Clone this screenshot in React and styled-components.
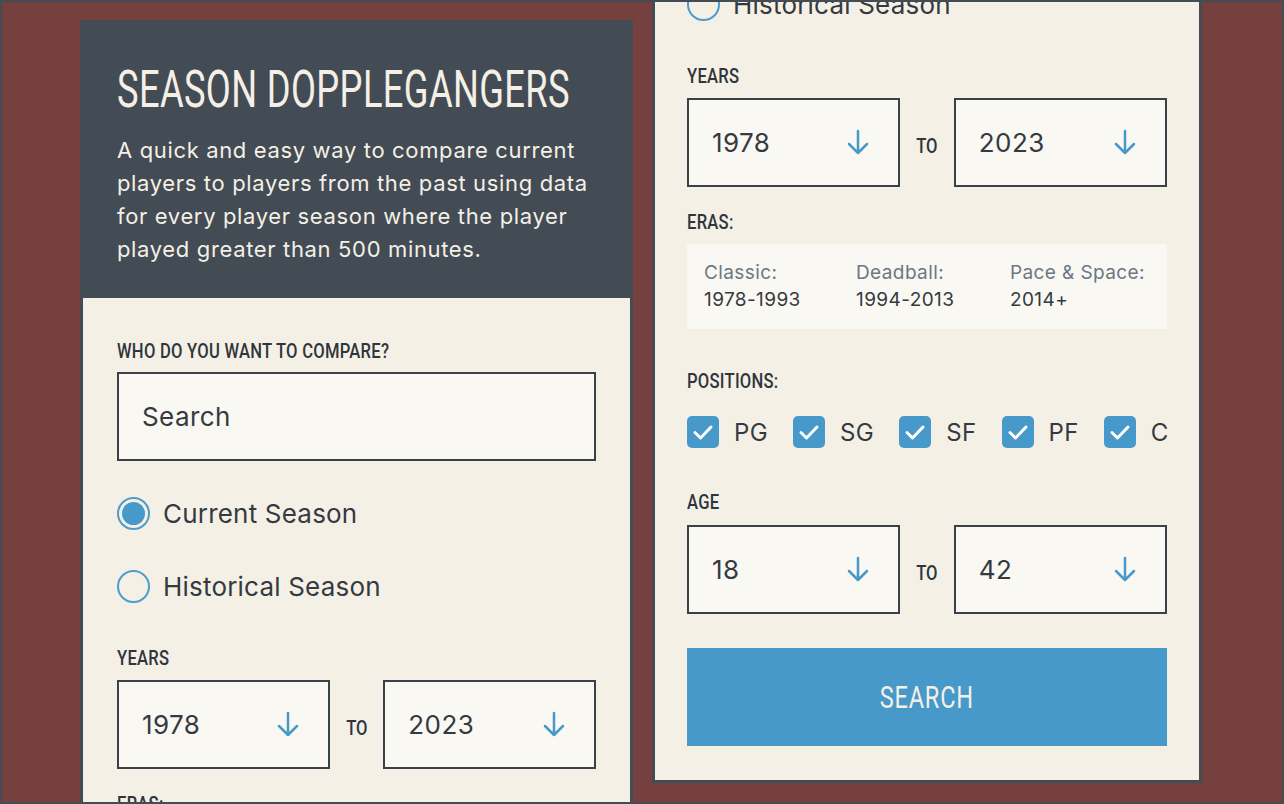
import React from "react";
import styled, { createGlobalStyle } from "styled-components";

const condensed = `Roboto, "Liberation Sans", sans-serif`;
const sans = `Inter, "Noto Sans", sans-serif`;

const GlobalStyle = createGlobalStyle`
  * { box-sizing: border-box; }
  html, body { margin: 0; padding: 0; }
  body { font-family: ${sans}; background: #76403f; }
`;

const Page = styled.div`
  width: 1284px;
  height: 804px;
  border: 2px solid #434b55;
  background: #76403f;
  overflow: hidden;
  display: flex;
  align-items: flex-start;
  gap: 19px;
  padding-left: 78px;
`;

const Card = styled.div`
  flex: none;
  width: ${(p) => p.$width}px;
  border: 3px solid #434b55;
  background: #f4f0e6;
  align-self: ${(p) => (p.$anchor === "bottom" ? "flex-end" : "flex-start")};
  margin: ${(p) => (p.$anchor === "bottom" ? "0 0 19px" : "18px 0 0")};
`;

const Header = styled.header`
  background: #434b55;
  color: #f4f0e6;
  padding: 39px ${(p) => p.$inset}px 32px;
`;

/* narrow display face: no condensed family is installed, so squeeze Roboto */
const Title = styled.h1`
  margin: 0;
  font-family: ${condensed};
  font-weight: 400;
  font-size: 51px;
  line-height: 56px;
  letter-spacing: 0.5px;
  text-transform: uppercase;
  white-space: nowrap;
  transform: scaleX(0.712);
  transform-origin: left center;
`;

const Intro = styled.p`
  margin: 16px 0 0;
  font-size: 22px;
  line-height: 33px;
  letter-spacing: 0.65px;
`;

const Body = styled.div`
  display: flex;
  flex-direction: column;
  padding: 41px ${(p) => p.$inset}px 34px;
  color: #343a40;
`;

const Group = styled.div`
  display: flex;
  flex-direction: column;
  align-items: flex-start;
  gap: ${(p) => p.$inner ?? 10}px;
  margin-top: ${(p) => p.$space ?? 0}px;
`;

const Label = styled.div`
  font-family: ${condensed};
  font-weight: 500;
  font-size: 20px;
  line-height: 24px;
  letter-spacing: 0.3px;
  text-transform: uppercase;
  white-space: nowrap;
  color: #2f353b;
  transform: scaleX(0.83);
  transform-origin: left center;
`;

const Box = styled.div`
  align-self: stretch;
  height: 89px;
  border: 2px solid #3b4148;
  background: #f9f8f3;
  display: flex;
  align-items: center;
  justify-content: space-between;
  padding: 0 29px 0 23px;
  font-size: 26px;
  letter-spacing: 0.4px;
  color: #343a40;
`;

const SelectBox = styled(Box)`
  flex: 1 1 0;
`;

const RadioRow = styled.label`
  display: flex;
  align-items: center;
  gap: 13px;
  height: 33px;
  font-size: 26px;
  letter-spacing: 0.2px;
  color: #343a40;
`;

const Radio = styled.span`
  width: 33px;
  height: 33px;
  border-radius: 50%;
  border: 2px solid #4d9dcc;
  display: flex;
  align-items: center;
  justify-content: center;
  &::after {
    content: "";
    width: 23px;
    height: 23px;
    border-radius: 50%;
    background: ${(p) => (p.$on ? "#4799c9" : "transparent")};
  }
`;

const RangeRow = styled.div`
  align-self: stretch;
  display: flex;
  align-items: center;
  gap: 16px;
`;

const To = styled.span`
  font-family: ${condensed};
  font-weight: 500;
  font-size: 20px;
  color: #2f353b;
  margin: 7px -2px 0;
  transform: scaleX(0.83);
`;

const Eras = styled.div`
  align-self: stretch;
  display: grid;
  grid-template-columns: 152px 154px 1fr;
  background: #f9f8f3;
  padding: 15px 17px 16px;
  font-size: 19px;
  line-height: 27px;
  letter-spacing: 0.4px;
`;

const EraName = styled.div`
  color: #6c7783;
`;

const EraRange = styled.div`
  color: #343a40;
`;

const Checks = styled.div`
  display: flex;
  align-items: center;
  gap: 25px;
`;

const CheckItem = styled.label`
  display: flex;
  align-items: center;
  gap: 15px;
  font-size: 24px;
  letter-spacing: 0.4px;
  color: #343a40;
`;

const CheckBox = styled.span`
  width: 32px;
  height: 32px;
  border-radius: 5px;
  background: #4799c9;
  display: flex;
  align-items: center;
  justify-content: center;
`;

const SearchButton = styled.button`
  margin-top: 34px;
  height: 98px;
  width: 100%;
  border: none;
  background: #4799c9;
  color: #f4f0e6;
  font-family: ${condensed};
  font-size: 31px;
  font-weight: 400;
  letter-spacing: 1px;
  text-transform: uppercase;
`;

const ButtonText = styled.span`
  display: inline-block;
  transform: scaleX(0.76);
`;

const Arrow = () => (
  <svg width="22" height="27" viewBox="0 0 22 27">
    <path
      d="M11 2v22M2 15l9 9 9-9"
      stroke="#4799c9"
      strokeWidth="2.5"
      fill="none"
      strokeLinecap="round"
      strokeLinejoin="round"
    />
  </svg>
);

const Tick = () => (
  <svg width="22" height="18" viewBox="0 0 22 18">
    <path
      d="M3 9.5l5.5 5.5L19 4"
      stroke="#fff"
      strokeWidth="3"
      fill="none"
      strokeLinecap="round"
      strokeLinejoin="round"
    />
  </svg>
);

const eras = [
  { name: "Classic:", range: "1978-1993" },
  { name: "Deadball:", range: "1994-2013" },
  { name: "Pace & Space:", range: "2014+" },
];

const positions = ["PG", "SG", "SF", "PF", "C"];

function Range({ from, to }) {
  return (
    <RangeRow>
      <SelectBox>
        {from}
        <Arrow />
      </SelectBox>
      <To>TO</To>
      <SelectBox>
        {to}
        <Arrow />
      </SelectBox>
    </RangeRow>
  );
}

function SeasonCard({ width, inset, anchor }) {
  return (
    <Card $width={width} $anchor={anchor}>
      <Header $inset={inset}>
        <Title>Season Dopplegangers</Title>
        <Intro>
          A quick and easy way to compare current players to players from the
          past using data for every player season where the player played
          greater than 500 minutes.
        </Intro>
      </Header>
      <Body $inset={inset}>
        <Group $inner={9}>
          <Label>Who do you want to compare?</Label>
          <Box>Search</Box>
        </Group>
        <Group $space={36} $inner={40}>
          <RadioRow>
            <Radio $on />
            Current Season
          </RadioRow>
          <RadioRow>
            <Radio />
            Historical Season
          </RadioRow>
        </Group>
        <Group $space={43}>
          <Label>Years</Label>
          <Range from="1978" to="2023" />
        </Group>
        <Group $space={23}>
          <Label>Eras:</Label>
          <Eras>
            {eras.map((e) => (
              <div key={e.name}>
                <EraName>{e.name}</EraName>
                <EraRange>{e.range}</EraRange>
              </div>
            ))}
          </Eras>
        </Group>
        <Group $space={40} $inner={23}>
          <Label>Positions:</Label>
          <Checks>
            {positions.map((p) => (
              <CheckItem key={p}>
                <CheckBox>
                  <Tick />
                </CheckBox>
                {p}
              </CheckItem>
            ))}
          </Checks>
        </Group>
        <Group $space={42} $inner={11}>
          <Label>Age</Label>
          <Range from="18" to="42" />
        </Group>
        <SearchButton>
          <ButtonText>Search</ButtonText>
        </SearchButton>
      </Body>
    </Card>
  );
}

export default function App() {
  return (
    <>
      <GlobalStyle />
      <Page>
        <SeasonCard width={553} inset={34} anchor="top" />
        <SeasonCard width={550} inset={32} anchor="bottom" />
      </Page>
    </>
  );
}
